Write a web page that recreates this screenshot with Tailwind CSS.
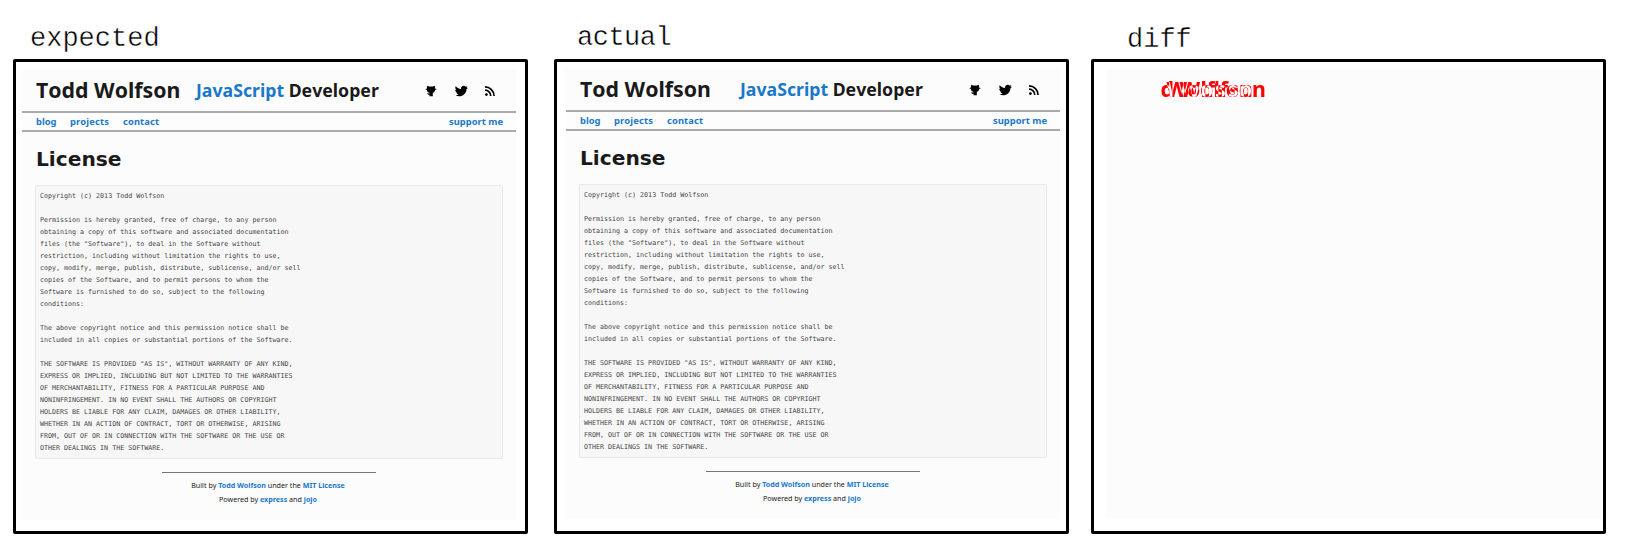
<!DOCTYPE html>
<html lang="en">
<head>
<meta charset="utf-8">
<title>Visual diff</title>
<script src="https://cdn.jsdelivr.net/npm/@tailwindcss/browser@4"></script>
</head>
<body class="bg-white w-[1631px] h-[550px] overflow-hidden">
<main class="flex h-[550px] items-start pl-[13px]">
  <section class="w-[515px] shrink-0">
    <h2 class="h-[59px] pl-[17px] pt-[24px] font-['Liberation_Mono'] text-[27px] leading-[30px] text-black whitespace-nowrap [-webkit-text-stroke:0.4px_white]">expected</h2>
    <div class="h-[475px] rounded-[2px] border-3 border-black pl-[6px] pt-[8px]">
      <div id="page" class="h-[450px] w-[494px] bg-[#fcfcfc] font-['DejaVu_Sans'] text-[#1a1a1a]">
        <header class="flex h-[41px] items-center pl-[14px] whitespace-nowrap font-['Noto_Sans'] font-bold [font-kerning:none]">
          <h1 data-name class="w-[160px] pb-[2px] text-[21.3px] leading-[39px]">Todd Wolfson</h1>
          <p class="w-[229px] text-[17.7px] leading-[41px]"><span class="text-[#1a77c9]">JavaScript</span> Developer</p>
          <div class="flex items-center gap-[17px] text-black">
            <svg class="h-3 w-3" viewBox="0 0 12 12" fill="currentColor"><path d="M2.200.8L4 1.600h4L9.800.800l.5 3 1.700.5-1.700.5C10 6.700 8.800 7.600 7.800 7.800V11.200H4.500V9.800H3L2 8.200l2.500.4V7.800C3.200 7.600 2 6.700 1.700 4.800L0 4.300l1.700-.5z"/></svg>
            <svg class="h-3 w-[14px]" viewBox="0 0 24 20" fill="currentColor"><path d="M24 5l-2.500 1.500C21.500 14 15 19 9 19c-2.500 0-4.500-.6-6.300-1.900 2 .1 3.700-.6 5-1.600-1.800-.2-3.200-1.300-3.800-3h1.900C3.600 11.800 2 10 2 7.700l2 .5C2.200 6.700 1.700 4.200 2.900 2c2.500 2.800 5 4.200 9 4.600C11.500 3.500 13.800 1 16.700 1c1.400 0 2.500.6 3.400 1.500l3-1.100-1.700 2.400z"/></svg>
            <svg class="h-[10px] w-[10px]" viewBox="0 0 10 10" fill="none" stroke="currentColor" stroke-width="1.700"><circle cx="1.400" cy="8.600" r="1.400" fill="currentColor" stroke="none"/><path d="M0 4.200A5.800 5.800 0 0 1 5.800 10M0 .9A9.100 9.100 0 0 1 9.100 10"/></svg>
          </div>
        </header>
        <nav class="flex h-[21px] items-center border-y-2 border-[#aaa] bg-[#fdfdfd] pl-[14px] pr-[13px] pt-px font-['Noto_Sans'] text-[9.400px] font-bold text-[#1a77c9]">
          <a class="w-[34px]">blog</a><a class="w-[53px] tracking-[0.15px]">projects</a><a class="tracking-[0.1px]">contact</a><a class="ml-auto">support me</a>
        </nav>
        <h2 class="h-[53px] pl-[14px] pt-[15px] text-[20.200px] leading-[24px] font-bold">License</h2>
        <pre class="ml-[13px] h-[274px] w-[468px] rounded-[2px] border border-[#e8e8e8] bg-[#f7f7f7] pl-[4px] pt-[4px] font-['DejaVu_Sans_Mono'] text-[6.660px] leading-[12px] text-[#444]">Copyright (c) 2013 Todd Wolfson

Permission is hereby granted, free of charge, to any person
obtaining a copy of this software and associated documentation
files (the "Software"), to deal in the Software without
restriction, including without limitation the rights to use,
copy, modify, merge, publish, distribute, sublicense, and/or sell
copies of the Software, and to permit persons to whom the
Software is furnished to do so, subject to the following
conditions:

The above copyright notice and this permission notice shall be
included in all copies or substantial portions of the Software.

THE SOFTWARE IS PROVIDED "AS IS", WITHOUT WARRANTY OF ANY KIND,
EXPRESS OR IMPLIED, INCLUDING BUT NOT LIMITED TO THE WARRANTIES
OF MERCHANTABILITY, FITNESS FOR A PARTICULAR PURPOSE AND
NONINFRINGEMENT. IN NO EVENT SHALL THE AUTHORS OR COPYRIGHT
HOLDERS BE LIABLE FOR ANY CLAIM, DAMAGES OR OTHER LIABILITY,
WHETHER IN AN ACTION OF CONTRACT, TORT OR OTHERWISE, ARISING
FROM, OUT OF OR IN CONNECTION WITH THE SOFTWARE OR THE USE OR
OTHER DEALINGS IN THE SOFTWARE.</pre>
        <footer class="ml-[140px] mt-[13px] w-[214px] border-t border-[#777] pt-[6px] pr-[2px] text-center font-['Noto_Sans'] text-[7.150px] leading-[13.500px] whitespace-nowrap">
          <p>Built by <b class="text-[#1a77c9]">Todd Wolfson</b> under the <b class="text-[#1a77c9]">MIT License</b></p>
          <p>Powered by <b class="text-[#1a77c9]">express</b> and <b class="text-[#1a77c9]">jojo</b></p>
        </footer>
      </div>
    </div>
  </section>
  <section class="ml-[26px] w-[515px] shrink-0">
    <h2 class="h-[59px] pl-[23px] pt-[23px] font-['Liberation_Mono'] text-[27px] leading-[30px] tracking-[-0.5px] text-black whitespace-nowrap [-webkit-text-stroke:0.4px_white]">actual</h2>
    <div id="actual" class="h-[475px] rounded-[2px] border-3 border-black pl-[9px] pt-[7px]"></div>
  </section>
  <section class="ml-[22px] w-[515px] shrink-0">
    <h2 class="h-[59px] pl-[36px] pt-[25px] font-['Liberation_Mono'] text-[27px] leading-[30px] text-black whitespace-nowrap [-webkit-text-stroke:0.4px_white]">diff</h2>
    <div class="h-[475px] rounded-[2px] border-3 border-black pl-[13px] pt-[7px]">
      <div class="isolate h-[450px] w-[494px] bg-[#fcfcfc] font-['Noto_Sans'] text-[21.300px] font-bold text-[#0ff] leading-[39px] whitespace-nowrap [font-kerning:none]">
        <div class="relative h-[41px]"><span class="absolute top-0 left-[53.500px] mix-blend-difference">d Wolfson</span><span class="absolute top-0 left-[59.500px] mix-blend-difference">Wolfson</span></div>
      </div>
    </div>
  </section>
</main>
<script>
const copy = document.getElementById('page').cloneNode(true);
copy.removeAttribute('id');
copy.querySelector('[data-name]').textContent = 'Tod Wolfson';
document.getElementById('actual').append(copy);
</script>
</body>
</html>
